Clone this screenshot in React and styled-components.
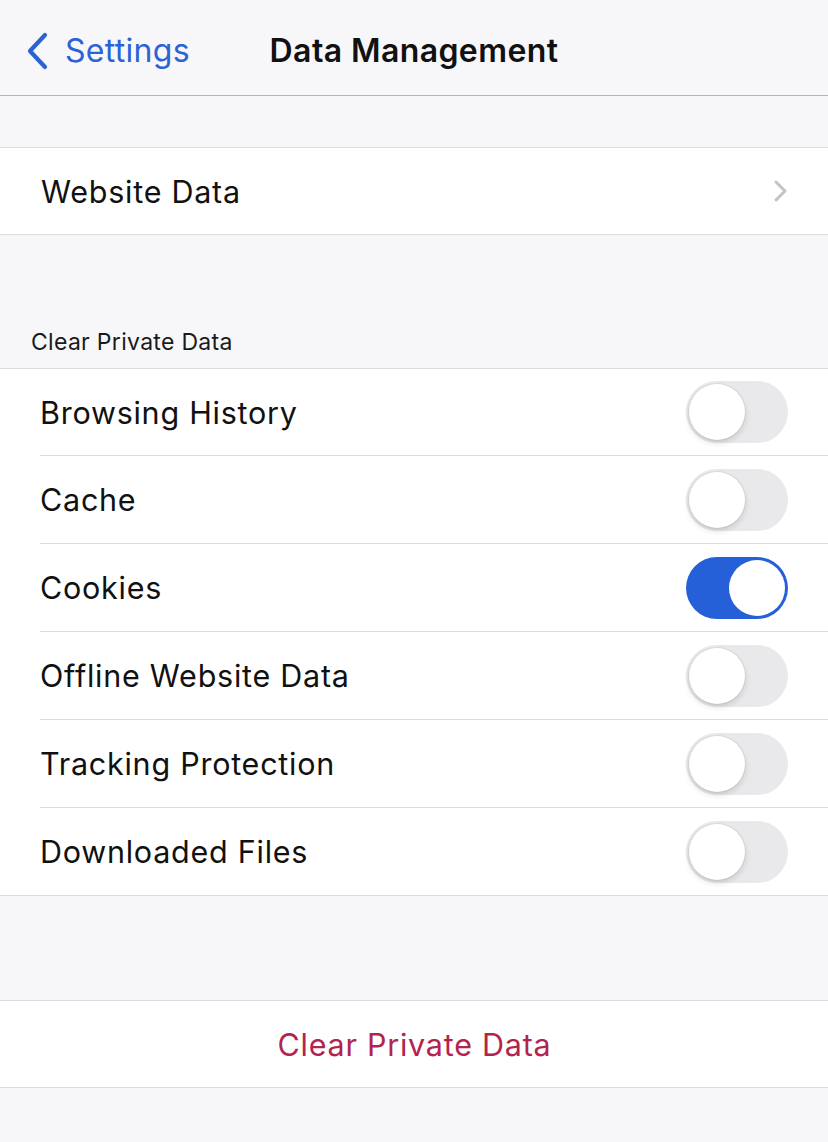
import React, { useState } from 'react';
import styled, { createGlobalStyle } from 'styled-components';

const GlobalStyle = createGlobalStyle`
  body {
    margin: 0;
    background: #f7f7f9;
    font-family: Inter, "Noto Sans", sans-serif;
    -webkit-font-smoothing: antialiased;
  }
`

const Page = styled.div`
  min-height: 1142px;
  background: #f7f7f9;
  color: #111;
`

const NavBar = styled.header`
  height: 96px;
  box-sizing: border-box;
  padding-top: 6px;
  display: grid;
  grid-template-columns: 1fr auto 1fr;
  align-items: center;
  background: #f7f7f9;
  border-bottom: 1px solid #b4b4b8;
`

const BackButton = styled.button`
  display: flex;
  align-items: center;
  gap: 17px;
  justify-self: start;
  padding: 0 0 0 26px;
  border: 0;
  background: none;
  color: #2b63d6;
  font-family: inherit;
  font-size: 32px;
  letter-spacing: 0.3px;
  cursor: pointer;
`

const Title = styled.h1`
  margin: 0;
  font-size: 32px;
  font-weight: 600;
  letter-spacing: 0.4px;
`

const Spacer = styled.div`
  height: ${p => p.$h}px;
`

const Group = styled.section`
  background: #fff;
  border-top: 1px solid #dcdcdf;
  border-bottom: 1px solid #dcdcdf;
`

const Row = styled.div`
  height: 86px;
  display: flex;
  align-items: center;
  justify-content: ${p => (p.$center ? 'center' : 'space-between')};
  padding: 0 40px 0 41px;
  font-size: 30.5px;
  letter-spacing: 0.75px;
  color: ${p => p.$color || '#111'};
`

const ListItem = styled.div`
  margin-left: 40px;
  height: 86px;
  display: flex;
  align-items: center;
  justify-content: space-between;
  padding-right: 40px;
  font-size: 30.5px;
  letter-spacing: 0.75px;
  & + & {
    height: 87px;
    border-top: 1px solid #dcdcdf;
  }
`

const SectionLabel = styled.div`
  height: 47px;
  box-sizing: border-box;
  padding: 0 0 6px 31px;
  display: flex;
  align-items: center;
  font-size: 23px;
  color: #1a1a1a;
  letter-spacing: 0.3px;
`

const Track = styled.button`
  position: relative;
  width: 102px;
  height: 62px;
  border-radius: 31px;
  border: 0;
  padding: 0;
  background: ${p => (p.$on ? '#2660d9' : '#e9e9eb')};
  cursor: pointer;
  flex-shrink: 0;
`

const Knob = styled.span`
  position: absolute;
  top: 3px;
  left: ${p => (p.$on ? '43px' : '3px')};
  width: 56px;
  height: 56px;
  border-radius: 50%;
  background: #fff;
  box-shadow: ${p => (p.$on ? 'none' : '0 3px 6px rgba(0,0,0,0.14), 0 0 0 1px rgba(0,0,0,0.05)')};
`

const Toggle = ({ on, onClick }) => (
  <Track $on={on} onClick={onClick} aria-pressed={on}>
    <Knob $on={on} />
  </Track>
)

const BackChevron = () => (
  <svg width="22" height="38" viewBox="0 0 22 38">
    <path d="M19 3 L4 19 L19 35" fill="none" stroke="#2b63d6" strokeWidth="4.2" strokeLinecap="round" strokeLinejoin="round" />
  </svg>
)

const Disclosure = () => (
  <svg width="15" height="24" viewBox="0 0 15 24">
    <path d="M3 3 L12 12 L3 21" fill="none" stroke="#c4c4c7" strokeWidth="3" strokeLinecap="round" strokeLinejoin="round" />
  </svg>
)

const items = [
  'Browsing History',
  'Cache',
  'Cookies',
  'Offline Website Data',
  'Tracking Protection',
  'Downloaded Files',
]

export default function App() {
  const [state, setState] = useState({ Cookies: true })

  return (
    <Page>
      <GlobalStyle />
      <NavBar>
        <BackButton>
          <BackChevron />
          Settings
        </BackButton>
        <Title>Data Management</Title>
        <div />
      </NavBar>
      <Spacer $h={51} />
      <Group>
        <Row>
          Website Data
          <Disclosure />
        </Row>
      </Group>
      <Spacer $h={86} />
      <SectionLabel>Clear Private Data</SectionLabel>
      <Group>
        {items.map(name => (
          <ListItem key={name}>
            {name}
            <Toggle
              on={!!state[name]}
              onClick={() => setState(s => ({ ...s, [name]: !s[name] }))}
            />
          </ListItem>
        ))}
      </Group>
      <Spacer $h={104} />
      <Group>
        <Row $center $color="#b3234e">Clear Private Data</Row>
      </Group>
    </Page>
  )
}
